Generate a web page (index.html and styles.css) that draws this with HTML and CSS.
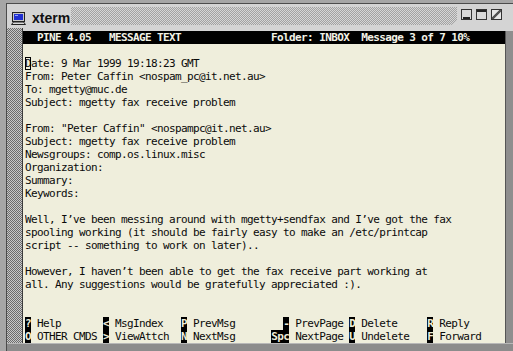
FILE: index.html
```html
<!DOCTYPE html>
<html>
<head>
<meta charset="utf-8">
<link rel="stylesheet" href="styles.css">
</head>
<body>
<div class="desktop">
  <div class="window">
    <div class="titlebar">
      <svg class="icon" width="15" height="13" viewBox="0 0 15 13">
        <rect x="1.5" y="0.5" width="12" height="9" fill="#c8c8c8" stroke="#222"/>
        <rect x="3" y="2" width="9" height="6" fill="#1f2fd0"/>
        <rect x="4" y="3" width="3" height="1" fill="#8fa0ff"/>
        <path d="M0.5 12.5 L2.5 10 L12.5 10 L14.5 12.5 Z" fill="#d8d8d8" stroke="#222"/>
      </svg>
      <span class="title">xterm</span>
      <div class="grip"></div>
      <div class="buttons">
        <div class="btn btn-min"><span></span></div>
        <div class="btn btn-max"><span></span></div>
        <div class="btn btn-close"><span></span></div>
      </div>
    </div>
    <div class="main">
      <div class="lframe"></div>
      <div class="term">
        <div class="row header">  PINE 4.05   MESSAGE TEXT               Folder: INBOX  Message 3 of 7 10%      </div>
        <div class="row"> </div>
        <div class="row"><span class="cursor">D</span>ate: 9 Mar 1999 19:18:23 GMT</div>
        <div class="row">From: Peter Caffin &lt;nospam_pc@it.net.au&gt;</div>
        <div class="row">To: mgetty@muc.de</div>
        <div class="row">Subject: mgetty fax receive problem</div>
        <div class="row"> </div>
        <div class="row">From: "Peter Caffin" &lt;nospampc@it.net.au&gt;</div>
        <div class="row">Subject: mgetty fax receive problem</div>
        <div class="row">Newsgroups: comp.os.linux.misc</div>
        <div class="row">Organization:</div>
        <div class="row">Summary:</div>
        <div class="row">Keywords:</div>
        <div class="row"> </div>
        <div class="row">Well, I’ve been messing around with mgetty+sendfax and I’ve got the fax</div>
        <div class="row">spooling working (it should be fairly easy to make an /etc/printcap</div>
        <div class="row">script -- something to work on later)..</div>
        <div class="row"> </div>
        <div class="row">However, I haven’t been able to get the fax receive part working at</div>
        <div class="row">all. Any suggestions would be gratefully appreciated :).</div>
        <div class="row"> </div>
        <div class="row"> </div>
        <div class="row"><span class="k">?</span> Help       <span class="k">&lt;</span> MsgIndex   <span class="k">P</span> PrevMsg        <span class="k">-</span> PrevPage <span class="k">D</span> Delete     <span class="k">R</span> Reply</div>
        <div class="row"><span class="k">O</span> OTHER CMDS <span class="k">&gt;</span> ViewAttch  <span class="k">N</span> NextMsg      <span class="k">Spc</span> NextPage <span class="k">U</span> Undelete   <span class="k">F</span> Forward</div>
      </div>
      <div class="rframe"></div>
    </div>
    <div class="bframe"></div>
  </div>
</div>
</body>
</html>
```

FILE: styles.css
```css
html, body {
  margin: 0;
  padding: 0;
}
body {
  background: #a6a6a6;
  width: 513px;
  height: 351px;
  overflow: hidden;
}
.desktop {
  padding: 3px 0 0 6px;
}
.window {
  border-top: 1px solid #4c4c4c;
  border-left: 1px solid #4c4c4c;
  width: 506px;
  height: 347px;
  display: flex;
  flex-direction: column;
  background: #d2d2d2;
}
.titlebar {
  height: 27px;
  display: flex;
  align-items: flex-start;
  background: #d4d4d4;
  flex: none;
}
.icon {
  margin: 8px 0 0 4px;
  flex: none;
}
.title {
  font-family: "Liberation Sans", Arial, sans-serif;
  font-weight: bold;
  font-size: 14px;
  line-height: 16px;
  color: #111;
  margin: 6px 0 0 6px;
  width: 39px;
  flex: none;
}
.grip {
  margin-top: 3px;
  height: 18px;
  width: 386px;
  flex: none;
  background-color: #c0c0c0;
  background-image: repeating-conic-gradient(#a2a2a2 0 25%, #d6d6d6 0 50%);
  background-size: 2px 2px;
  clip-path: polygon(0 0, 100% 0, 100% 75%, 98.5% 100%, 0 100%);
}
.buttons {
  display: flex;
  gap: 4px;
  margin: 5px 0 0 4px;
}
.btn {
  width: 11px;
  height: 11px;
  border: 1px solid #333;
  background: #d8d8d8;
  position: relative;
  box-sizing: border-box;
}
.btn-min span {
  position: absolute;
  left: 1px;
  right: 1px;
  bottom: 0;
  height: 2px;
  background: #222;
}
.btn-max span {
  position: absolute;
  left: 0;
  right: 0;
  top: 0;
  height: 2px;
  background: #222;
}
.btn-close {
  background: linear-gradient(135deg, #e8e8e8 0 38%, #555 42% 58%, #e8e8e8 62%);
}
.main {
  display: flex;
  height: 312px;
  flex: none;
}
.lframe {
  width: 15px;
  border-right: 1px solid #3c3c3c;
  margin-top: -3px;
  background-color: #c4c4c4;
  background-image: repeating-conic-gradient(#6c6c6c 0 25%, #c9c9c9 0 50%);
  background-size: 2px 2px;
  flex: none;
}
.term {
  width: 480px;
  padding-left: 2px;
  background: #efeedc;
  font-family: "DejaVu Sans Mono", "Liberation Mono", monospace;
  font-size: 11px;
  letter-spacing: -0.62px;
  color: #0a0a0a;
  flex: none;
}
.row {
  height: 13px;
  line-height: 13px;
  white-space: pre;
  overflow: hidden;
}
.header {
  background: #000;
  color: #f2f2e6;
  font-weight: bold;
  margin-left: -2px;
  padding-left: 2px;
}
.cursor {
  outline: 1px solid #000;
  outline-offset: -1px;
}
.k {
  background: #000;
  color: #efeedc;
  font-weight: bold;
}
.rframe {
  width: 8px;
  border-left: 1px solid #555;
  background: #8e8e8e;
  flex: none;
}
.bframe {
  height: 8px;
  flex: none;
  background: #8c8c8c;
  border-top: 1px solid #b8b8b8;
  box-sizing: border-box;
}
```
